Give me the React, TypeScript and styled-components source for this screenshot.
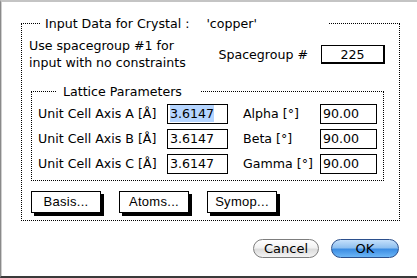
import React from "react";
import styled, { createGlobalStyle } from "styled-components";

const Global = createGlobalStyle`
  html, body { margin: 0; padding: 0; background: #ffffff; }
  body { font-family: "DejaVu Sans", "Liberation Sans", sans-serif; }
`;

const Window = styled.div`
  width: 417px;
  height: 278px;
  box-sizing: border-box;
  background: #ffffff;
  border-top: 2px solid #c4c4c4;
  border-left: 1px solid #8a8a8a;
  border-bottom: 2px solid #3a3a3a;
  box-shadow: inset 1px 0 0 #cfcfcf;
  padding: 14px 17px 0 20px;
  display: flex;
  flex-direction: column;
  color: #000;
  font-size: 12.6px;
`;

const Group = styled.fieldset`
  margin: 0;
  padding: 0;
  border: 1px dotted #000;
  min-width: 0;
`;

const Legend = styled.legend<{ $start: number; $width: number; $pad: number }>`
  margin-left: ${(p) => p.$start}px;
  padding: 0 0 0 ${(p) => p.$pad}px;
  width: ${(p) => p.$width}px;
  box-sizing: border-box;
  line-height: 15px;
  white-space: nowrap;
`;

const Crystal = styled.span`
  margin-left: 17px;
`;

const TopRow = styled.div`
  display: flex;
  align-items: center;
  padding: 2px 0 0 7px;
  height: 42px;
`;

const Note = styled.div`
  line-height: 17px;
  flex: 1;
`;

const SgLabel = styled.span`
  margin-right: 13px;
`;

const SgBox = styled.div`
  width: 64px;
  height: 19px;
  box-sizing: border-box;
  border: 1px solid #000;
  border-right-width: 2px;
  border-bottom-width: 2px;
  text-align: center;
  line-height: 17px;
  margin-right: 14px;
`;

const Inner = styled(Group)`
  margin: 9px 15px 0 9px;
  padding: 5px 0 6px 6px;
`;

const Grid = styled.div`
  display: grid;
  grid-template-columns: 129px 76px 77px 56px;
  row-gap: 5px;
  align-items: center;
`;

const Label = styled.span`
  line-height: 20px;
`;

const Field = styled.div<{ $w: number }>`
  width: ${(p) => p.$w}px;
  height: 20px;
  box-sizing: border-box;
  border: 1px solid #000;
  padding-left: 2px;
  line-height: 18px;
`;

const Selected = styled.span`
  background: #b5d5ff;
  padding: 1px 0;
`;

const Buttons = styled.div`
  display: flex;
  gap: 18px;
  padding: 10px 0 7px 9px;
`;

const BevelButton = styled.div`
  width: 70px;
  height: 22px;
  box-sizing: border-box;
  border: 1px solid #000;
  background: #fff;
  box-shadow: 3px 3px 0 #000;
  text-align: center;
  line-height: 20px;
  letter-spacing: 0.3px;
  font-family: "Liberation Sans", sans-serif;
  font-size: 13px;
`;

const Footer = styled.div`
  display: flex;
  justify-content: flex-end;
  gap: 12px;
  padding-top: 18px;
  margin-right: 1px;
`;

const Pill = styled.div<{ $default?: boolean; $w: number }>`
  width: ${(p) => p.$w}px;
  height: 19px;
  box-sizing: border-box;
  border-radius: 10px;
  border: 1px solid ${(p) => (p.$default ? "#2b4f8c" : "#7d7d7d")};
  background: ${(p) =>
    p.$default
      ? "linear-gradient(#c4e0fb 0%, #8fc0f0 45%, #3c8de3 55%, #6cb6f6 100%)"
      : "linear-gradient(#ffffff 0%, #f2f2f2 45%, #dcdcdc 55%, #f4f4f4 100%)"};
  text-align: center;
  line-height: 17px;
  font-size: 13px;
`;

export default function App() {
  return (
    <>
      <Global />
      <Window>
        <Group>
          <Legend $start={19} $width={287} $pad={4}>
            Input Data for Crystal :<Crystal>'copper'</Crystal>
          </Legend>
          <TopRow>
            <Note>
              Use spacegroup #1 for
              <br />
              input with no constraints
            </Note>
            <SgLabel>Spacegroup #</SgLabel>
            <SgBox>225</SgBox>
          </TopRow>
          <Inner>
            <Legend $start={19} $width={144} $pad={6}>
              Lattice Parameters
            </Legend>
            <Grid>
              <Label>Unit Cell Axis A [Å]</Label>
              <Field $w={61}>
                <Selected>3.6147</Selected>
              </Field>
              <Label>Alpha [°]</Label>
              <Field $w={57}>90.00</Field>
              <Label>Unit Cell Axis B [Å]</Label>
              <Field $w={61}>3.6147</Field>
              <Label>Beta [°]</Label>
              <Field $w={57}>90.00</Field>
              <Label>Unit Cell Axis C [Å]</Label>
              <Field $w={61}>3.6147</Field>
              <Label>Gamma [°]</Label>
              <Field $w={57}>90.00</Field>
            </Grid>
          </Inner>
          <Buttons>
            <BevelButton>Basis...</BevelButton>
            <BevelButton>Atoms...</BevelButton>
            <BevelButton>Symop...</BevelButton>
          </Buttons>
        </Group>
        <Footer>
          <Pill $w={66}>Cancel</Pill>
          <Pill $w={68} $default>
            OK
          </Pill>
        </Footer>
      </Window>
    </>
  );
}
